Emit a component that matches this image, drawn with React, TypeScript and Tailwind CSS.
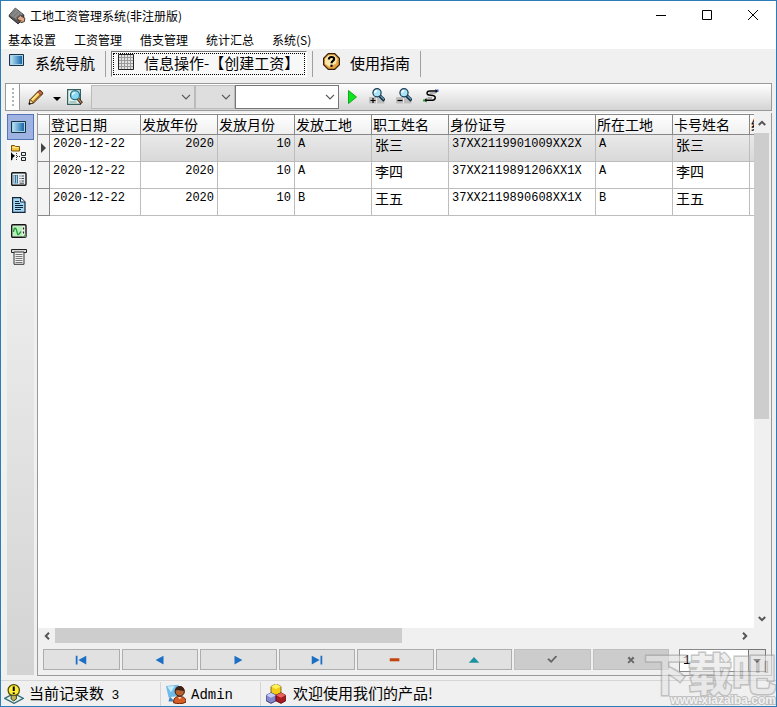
import type { ReactNode } from "react"

const menus = ["基本设置", "工资管理", "借支管理", "统计汇总", "系统(S)"]

const columns = [
  { title: "登记日期", width: "w-[91px]" },
  { title: "发放年份", width: "w-[77px]" },
  { title: "发放月份", width: "w-[77px]" },
  { title: "发放工地", width: "w-[77px]" },
  { title: "职工姓名", width: "w-[77px]" },
  { title: "身份证号", width: "w-[147px]" },
  { title: "所在工地", width: "w-[77px]" },
  { title: "卡号姓名", width: "w-[77px]" },
  { title: "结余", width: "w-[120px]" },
]

const records = [
  { date: "2020-12-22", year: 2020, month: 10, site: "A", name: "张三", idNo: "37XX2119901009XX2X" },
  { date: "2020-12-22", year: 2020, month: 10, site: "A", name: "李四", idNo: "37XX2119891206XX1X" },
  { date: "2020-12-22", year: 2020, month: 10, site: "B", name: "王五", idNo: "37XX2119890608XX1X" },
]

function Icon({ size = 16, className, children }: { size?: number; className?: string; children: ReactNode }) {
  return (
    <svg width={size} height={size} viewBox="0 0 16 16" className={className} aria-hidden="true">
      {children}
    </svg>
  )
}

function AppIcon() {
  return (
    <Icon size={18}>
      <path d="M6.5 1 14 7v3l-5 5L1 8.500 1.200 7z" fill="#555" stroke="#222" strokeWidth=".8" />
      <path d="M6.500 1 13 6.500 7.500 11 1.300 7z" fill="#8a8a8a" />
      <path d="M3 7.200 6.700 3M5 8.500 9 4.500M7 10l4-4" stroke="#666" strokeWidth=".7" />
      <path d="m8 10 3-2.500 4 2.500-.5 3-3 1z" fill="#d9a98a" stroke="#3b2a22" strokeWidth=".8" />
      <path d="m9 11.500 3 1" stroke="#6b4433" />
    </Icon>
  )
}

function ScreenIcon() {
  return (
    <Icon>
      <defs>
        <linearGradient id="screen" x1="0" x2="1" y1="0" y2="0">
          <stop offset="0" stopColor="#b4e0f5" />
          <stop offset="1" stopColor="#1667a8" />
        </linearGradient>
      </defs>
      <path d="M.5 2.500h14v11H.5z" fill="#a9cfe3" stroke="#16324a" />
      <path d="M2 4h11v8H2z" fill="url(#screen)" />
    </Icon>
  )
}

function GridIcon() {
  return (
    <Icon>
      <path d="M.5.500h15v15H.5z" fill="#e4e4e4" stroke="#222" />
      <path d="M3.500 1v14M6.500 1v14M9.500 1v14M12.500 1v14M1 3.500h14M1 6.500h14M1 9.500h14M1 12.500h14" stroke="#9a9a9a" />
    </Icon>
  )
}

function HelpIcon() {
  return (
    <Icon size={17}>
      <path d="M5 .6h6l4.400 4.400v6L11 15.400H5L.6 11V5z" fill="#e9a544" stroke="#3a2105" strokeWidth="1.200" />
      <path d="M5.500 2h5L13.500 5.500 12 10 6 13 2 10V5.500z" fill="#fce7ab" />
      <path d="M5.500 6c0-3 5-3 5-.3C10.500 7.500 8 7.500 8 9.600" fill="none" stroke="#000" strokeWidth="2" />
      <path d="M7 11h2v2H7z" />
    </Icon>
  )
}

function PencilIcon() {
  return (
    <Icon>
      <path d="M1 15.200 2.200 10.500 11 1.500c1-1 4.500 2 3.500 3.500L5.500 14z" fill="#efb43e" stroke="#3b2508" />
      <path d="m4 11 8-8" stroke="#fff0a8" strokeWidth="1.300" />
      <path d="m5.500 12.500 8-8" stroke="#a35f12" />
      <path d="M11 2c1-1 4 1.500 3.300 3L12.800 6.200 9.800 3.200z" fill="#c96a4a" stroke="#5c2512" strokeWidth=".7" />
      <path d="M1 15.200 2.200 10.500 5.500 14z" fill="#f6dfb0" stroke="#3b2508" strokeWidth=".8" />
      <path d="m.8 15.400.6-2.200 1.500 1.500z" />
    </Icon>
  )
}

function PreviewIcon() {
  return (
    <Icon>
      <path d="M.6.600h12.800v14.800H.6z" fill="#e3f1ec" stroke="#37615e" strokeWidth="1.200" />
      <path d="M2.500 13h7" stroke="#6aa39c" />
      <circle cx="8" cy="6.200" r="4.500" fill="#8bd8f2" stroke="#27708a" strokeWidth="1.300" />
      <path d="M5.500 6.200a2.500 2.500 0 0 1 2.500-2.500" fill="none" stroke="#fff" strokeWidth="1.200" />
      <path d="m11 9.800 3.800 4.400" stroke="#2c2115" strokeWidth="3" />
      <path d="m11 9.800 3.300 3.800" stroke="#c98d58" strokeWidth="1.300" />
    </Icon>
  )
}

function ZoomIcon({ sign }: { sign: "+" | "-" }) {
  return (
    <Icon>
      <rect x="0" y="9" width="15.500" height="6.500" rx="1" fill="#bdbdbd" />
      <path d="M7.500 9v6.500" stroke="#e8e8e8" />
      <path d="m10.500 7.500 5 5" stroke="#12283a" strokeWidth="3.200" />
      <path d="m11.500 8 3.500 3.500" stroke="#5f9cc0" strokeWidth="1.200" />
      <circle cx="8" cy="4.800" r="4.100" fill="#a9e4f7" stroke="#1b3b55" strokeWidth="1.200" />
      <path d="M6 4.800a2 2 0 0 1 2-2" fill="none" stroke="#fff" strokeWidth="1.500" />
      <path d={sign === "+" ? "M1.500 12.500h5M4 10v5" : "M1.500 12.500h5"} stroke="#000" strokeWidth="1.200" />
    </Icon>
  )
}

function RefreshIcon() {
  return (
    <Icon>
      <path d="M14.500 3H7C3.500 3 3 6.500 6 7l4 .6c3.500.6 2.500 4.600-.5 4.600H2" fill="none" stroke="#000" strokeWidth="1.500" />
      <path d="M6.500 5H12M4.500 10H9" stroke="#555" strokeWidth=".8" />
      <path d="m12.500 1 2.500 2-2.500 2.500z" fill="#111" />
      <path d="M3.500 10 1 12.200l2.500 2.300z" fill="#111" />
      <path d="M14 1.500h1.500V4H14z" fill="#35c" />
      <path d="M0 11.500h2v2H0z" fill="#2a2" />
    </Icon>
  )
}

function TreeIcon() {
  return (
    <Icon>
      <path d="M.5.500h3l1 1h4v4.500h-8z" fill="#f5c542" stroke="#7a5208" />
      <path d="M1.500 2.500h6" stroke="#fff0a5" />
      <path d="M0 7v8.500l1.500-1V13L4 10.800 1.500 9z" fill="#000" />
      <path d="M5.500 8v7M6 11.500h4" stroke="#333" strokeDasharray="1 1" />
      <path d="M10.500 7.500h4v3h-4zM10.500 12.500h4v3h-4z" fill="#e8eef5" stroke="#222" />
    </Icon>
  )
}

function FormIcon() {
  return (
    <Icon>
      <rect x=".7" y="1.700" width="14.300" height="12.600" rx="1" fill="#e9eff2" stroke="#151515" strokeWidth="1.400" />
      <path d="M2.500 4h4.500v8.500H2.500z" fill="#3f7496" />
      <path d="M3.500 4.500v8M5.500 4.500v8" stroke="#a9d2e6" />
      <path d="M8.500 5h1M8.500 7.500h1M8.500 10h1M10.500 5H13M10.500 7.500H13M10.500 10H13M8.500 12.200h4.500" stroke="#444" />
    </Icon>
  )
}

function DocumentIcon() {
  return (
    <Icon>
      <path d="M1.600.7H9.500L14 5v10.300H1.600z" fill="#a5d6f3" stroke="#12273c" strokeWidth="1.200" />
      <path d="M9.500 1v4H14" fill="#e6f5fd" stroke="#12273c" />
      <path d="M4 4.500h4M4 6.500h5M4 8.500h8M4 10.500h8M4 12.500h6" stroke="#0c2238" />
    </Icon>
  )
}

function ChartIcon() {
  return (
    <Icon>
      <rect x=".7" y="1.700" width="14.300" height="12.600" rx="1" fill="#e6f1e6" stroke="#151515" strokeWidth="1.400" />
      <path d="M2 3.200h9v9.800H2z" fill="#b5f0b5" />
      <path d="M2.500 9c.5-5 2.500-5 3.500 0s2 2 4-.5" fill="none" stroke="#21963a" strokeWidth="1.300" />
      <path d="M12.500 4.500v2M12.500 8.500v2" stroke="#222" strokeWidth="1.200" />
      <path d="m15 10-3.500 4.300H15z" fill="#5a9a5a" />
    </Icon>
  )
}

function ReportIcon() {
  return (
    <Icon>
      <path d="M.5.500h15v3H.5z" fill="#dcdcdc" stroke="#222" />
      <path d="M3 3h10v12.300H3z" fill="#f1f1f1" stroke="#333" />
      <path d="M4.500 5.500h7M4.500 7.500h7M4.500 9.500h7M4.500 11.500h7M4.500 13.500h7" stroke="#777" />
    </Icon>
  )
}

function TipIcon() {
  return (
    <Icon size={20}>
      <path d="m.5 11.500 7.500-4 7.500 4L8 15.500z" fill="#e2f3f1" stroke="#326c77" />
      <circle cx="7.800" cy="5" r="4.500" fill="#ffed36" stroke="#4f4900" />
      <path d="M5.700 9h4.200v3L7.800 13.500 5.700 12z" fill="#bdb45b" stroke="#444018" strokeWidth=".8" />
      <path d="M7.800 2v3.600M7.800 6.700v1.300" stroke="#000" strokeWidth="1.600" />
    </Icon>
  )
}

function UserIcon() {
  return (
    <Icon size={20}>
      <path d="m0 1.500 10-1v9l-8 1z" fill="#6fbbe8" />
      <path d="m1 2 6-.5-3 5z" fill="#c9ebfb" />
      <path d="m3 10 4 4H2z" fill="#3c85c0" />
      <path d="M6 15c0-5 3-5 5-5s5 .5 5 4.500c-3 1.500-7 1.500-10 .5z" fill="#d85c24" stroke="#6b2608" strokeWidth=".8" />
      <path d="m9.500 10.500 1.500 1.500 1.500-1.500z" fill="#fff" />
      <circle cx="11" cy="6" r="3.700" fill="#b5622f" stroke="#351708" strokeWidth=".8" />
      <path d="M7.300 5.500c0-5.500 7.700-5 7.400.2-3 0-5-1.700-7.400-.2z" fill="#3e2114" />
    </Icon>
  )
}

function CubesIcon() {
  return (
    <Icon size={20}>
      <path d="m8 0 4 2v5L8 9 4 7V2z" fill="#f2cc18" stroke="#5f4c00" strokeWidth=".6" />
      <path d="m8 0 4 2-4 2-4-2z" fill="#fff25d" />
      <path d="m4 7 4 2v4.500l-4 2-3.800-2V9z" fill="#8587cc" stroke="#282a66" strokeWidth=".6" />
      <path d="m4 7 4 2-4 2-3.800-2z" fill="#c6c8f5" />
      <path d="m12 7 3.700 2v4.500l-3.700 2-4-2V9z" fill="#a91920" stroke="#4d0003" strokeWidth=".6" />
      <path d="m12 7 3.700 2L12 11 8 9z" fill="#e8635e" />
    </Icon>
  )
}

function Chevron({ className }: { className?: string }) {
  return (
    <svg width="10" height="6" viewBox="0 0 10 6" className={className} aria-hidden="true">
      <path d="m1 .8 4 4 4-4" fill="none" stroke="currentColor" strokeWidth="1.200" />
    </svg>
  )
}

function ScrollChevron({ className }: { className?: string }) {
  return (
    <svg width="8" height="6" viewBox="0 0 8 6" className={className} aria-hidden="true">
      <path d="m.8 1 3.200 3.200L7.200 1" fill="none" stroke="currentColor" strokeWidth="2" />
    </svg>
  )
}

function ToolSelect({ label, className }: { label: string; className: string }) {
  return (
    <div className="relative">
      <select aria-label={label} className={`block h-6 appearance-none border outline-none ${className}`}>
        <option></option>
      </select>
      <Chevron className="pointer-events-none absolute right-1 top-[9px] text-[#555]" />
    </div>
  )
}

function Separator() {
  return <div className="h-[26px] w-px bg-[#a0a0a0]" />
}

const sideTools = [
  { label: "表格", icon: <ScreenIcon /> },
  { label: "分组", icon: <TreeIcon /> },
  { label: "表单", icon: <FormIcon /> },
  { label: "文档", icon: <DocumentIcon /> },
  { label: "图表", icon: <ChartIcon /> },
  { label: "报表", icon: <ReportIcon /> },
]

const navButtons = [
  { label: "首条", fill: "#1b6fc4", d: "M2 3h2v10H2zM14 3v10L5 8z" },
  { label: "上一条", fill: "#1b6fc4", d: "M12 3v10L3 8z" },
  { label: "下一条", fill: "#1b6fc4", d: "M4 3v10l9-5z" },
  { label: "末条", fill: "#1b6fc4", d: "M2 3v10l9-5zM12 3h2v10h-2z" },
  { label: "删除", fill: "#c2450f", d: "M2 6h11v3.500H2z" },
  { label: "编辑", fill: "#1a93a0", d: "M2 11h12L8 4.500z" },
  { label: "保存", fill: "#666", d: "m2.500 7 2-1L7 8.500 12 3l2 1-7 7.500z", disabled: true },
  { label: "取消", fill: "#666", d: "M4 6l2-2 2 2.500L10 4l2 2-2.500 2L12 10.500 10.500 12 8 9.500 5.500 12 4 10.500 6.500 8z", disabled: true },
]

function TitleBar() {
  return (
    <header className="bg-white">
      <div className="flex h-[30px] items-center gap-1 pl-[7px]">
        <AppIcon />
        <h1 className="flex-1 text-xs">工地工资管理系统(非注册版)</h1>
        <div className="flex h-full pb-[2px]">
          <button aria-label="最小化" className="grid h-full w-[46px] place-items-center">
            <svg width="10" height="10"><path d="M0 5.500h10" stroke="#000" /></svg>
          </button>
          <button aria-label="最大化" className="grid h-full w-[46px] place-items-center">
            <svg width="10" height="10"><path d="M.5.500h9v9h-9z" fill="none" stroke="#000" /></svg>
          </button>
          <button aria-label="关闭" className="grid h-full w-[46px] place-items-center">
            <svg width="10" height="10"><path d="m0 0 10 10M10 0 0 10" stroke="#000" /></svg>
          </button>
        </div>
      </div>
      <nav className="flex h-[18px] items-center gap-[18px] pl-[7px] text-xs">
        {menus.map((m) => (
          <button key={m}>{m}</button>
        ))}
      </nav>
    </header>
  )
}

function MainTabs() {
  return (
    <div className="flex h-[34px] items-center pb-[5px] text-[15px]">
      <button className="flex w-[104px] items-center gap-[10px] pl-2">
        <span className="pb-2"><ScreenIcon /></span>
        系统导航
      </button>
      <Separator />
      <button className="mx-[5px] flex h-[26px] w-[196px] items-center whitespace-nowrap border border-r-white border-b-white border-l-[#777] border-t-[#777] bg-[#f8f8f8] p-px">
        <span className="flex h-full w-full items-center gap-[10px] border border-dotted border-black pl-1">
          <span className="pb-1"><GridIcon /></span>
          信息操作-【创建工资】
        </span>
      </button>
      <Separator />
      <button className="flex w-[107px] items-center gap-[10px] pl-[10px]">
        <span className="pb-1"><HelpIcon /></span>
        使用指南
      </button>
      <Separator />
    </div>
  )
}

function ToolBar() {
  return (
    <div className="mx-1 flex h-7 items-center border border-[#999] bg-linear-to-b from-white to-[#d4d4d4]">
      <div className="flex h-full w-[14px] justify-center border-r border-[#999] bg-white py-1">
        <div className="h-full border-l-2 border-dotted border-[#b5b5b5]" />
      </div>
      <button aria-label="编辑" className="ml-2"><PencilIcon /></button>
      <button aria-label="编辑选项" className="ml-[9px] mt-1">
        <svg width="8" height="4" className="block"><path d="M0 0h8L4 4z" /></svg>
      </button>
      <button aria-label="预览" className="ml-[6px] mr-2"><PreviewIcon /></button>
      <ToolSelect label="字段" className="w-[104px] border-[#bbb] bg-[#dedede]" />
      <ToolSelect label="条件" className="w-10 border-[#bbb] bg-[#dedede]" />
      <ToolSelect label="内容" className="w-[104px] border-[#777] bg-white" />
      <button aria-label="执行" className="ml-[9px] mr-3">
        <svg width="9" height="14" className="block"><path d="M.5.500v13l8-6.500z" fill="#0be51c" stroke="#14a81c" /></svg>
      </button>
      <div className="flex items-center gap-[11px] pb-[2px]">
        <button aria-label="放大"><ZoomIcon sign="+" /></button>
        <button aria-label="缩小"><ZoomIcon sign="-" /></button>
        <button aria-label="刷新"><RefreshIcon /></button>
      </div>
    </div>
  )
}

function SideBar() {
  return (
    <aside className="mb-px mt-px flex w-[27px] flex-col bg-linear-to-b from-[#f8f8f8] to-[#d3d3d3]">
      {sideTools.map((tool, i) => (
        <button
          key={tool.label}
          aria-label={tool.label}
          className={`grid h-[26px] place-items-center border pr-1 ${i === 0 ? "border-[#5674b9] bg-[#9fb3e2]" : "border-transparent"}`}
        >
          {tool.icon}
        </button>
      ))}
    </aside>
  )
}

function RecordTable() {
  const cell = "whitespace-nowrap border-b border-r border-[#bdbdbd] px-[3px] align-top"
  const mono = "font-[Liberation_Mono,monospace] text-xs leading-[18px]"
  const cjk = "text-sm leading-[18px]"

  return (
    <table className="mt-px w-[832px] table-fixed border-separate border-spacing-0">
      <thead>
        <tr className="h-[21px] bg-linear-to-b from-white to-[#efefef]">
          <th className="w-3 border-b border-r border-t border-[#888]" aria-label="当前行"></th>
          {columns.map((c) => (
            <th key={c.title} className={`${c.width} whitespace-nowrap border-b border-r border-t border-[#888] px-px text-left text-sm leading-[19px] font-normal`}>
              {c.title}
            </th>
          ))}
        </tr>
      </thead>
      <tbody>
        {records.map((r, i) => (
          <tr key={r.idNo} className={i === 0 ? "h-[27px] bg-linear-to-b from-[#e9e9e9] to-[#d8d8d8]" : "h-[27px] bg-white"}>
            <td className="border-b border-r border-[#888] bg-[#f3f3f3] pl-[3px]">
              {i === 0 && <svg width="5" height="10" className="block"><path d="M0 0v10l5-5z" fill="#444" /></svg>}
            </td>
            <td className={`${cell} ${mono} bg-white`}>{r.date}</td>
            <td className={`${cell} ${mono} text-right`}>{r.year}</td>
            <td className={`${cell} ${mono} text-right`}>{r.month}</td>
            <td className={`${cell} ${mono}`}>{r.site}</td>
            <td className={`${cell} ${cjk}`}>{r.name}</td>
            <td className={`${cell} ${mono}`}>{r.idNo}</td>
            <td className={`${cell} ${mono}`}>{r.site}</td>
            <td className={`${cell} ${cjk}`}>{r.name}</td>
            <td className={cell}></td>
          </tr>
        ))}
      </tbody>
    </table>
  )
}

function VerticalScroll() {
  return (
    <div className="flex w-[17px] shrink-0 flex-col bg-[#f0f0f0] pr-[2px] text-[#555]">
      <button aria-label="向上" className="grid h-5 shrink-0 place-items-center"><ScrollChevron className="rotate-180" /></button>
      <div className="flex-1">
        <div className="h-3/5 w-full bg-[#cdcdcd]" />
      </div>
      <button aria-label="向下" className="grid h-[18px] shrink-0 place-items-center"><ScrollChevron /></button>
    </div>
  )
}

function HorizontalScroll() {
  return (
    <div className="flex h-[15px] shrink-0 items-center pr-[18px] text-[#555]">
      <button aria-label="向左" className="grid w-[17px] place-items-center"><ScrollChevron className="rotate-90" /></button>
      <div className="h-full flex-1">
        <div className="h-full w-[51%] bg-[#cdcdcd]" />
      </div>
      <button aria-label="向右" className="grid w-[17px] place-items-center"><ScrollChevron className="-rotate-90" /></button>
    </div>
  )
}

function Navigator() {
  return (
    <div className="flex items-start gap-[10px] px-[5px] pb-[3px] pt-[6px]">
      <div className="grid flex-1 grid-cols-8 gap-[2px]">
        {navButtons.map((b) => (
          <button
            key={b.label}
            aria-label={b.label}
            disabled={b.disabled}
            className={`grid h-[21px] place-items-center border ${b.disabled ? "border-[#bfbfbf] bg-[#cccccc]" : "border-[#adadad] bg-[#e1e1e1]"}`}
          >
            <Icon size={14}><path d={b.d} fill={b.fill} /></Icon>
          </button>
        ))}
      </div>
      <div className="relative">
        <select aria-label="页码" className="block h-[23px] w-[87px] appearance-none border border-[#888] bg-white px-[3px] font-[Liberation_Mono,monospace] text-[13px]">
          <option>1</option>
        </select>
        <div className="pointer-events-none absolute right-0 top-0 grid h-[23px] w-[18px] place-items-center border border-[#777] bg-[#e6e6e6]">
          <svg width="8" height="4"><path d="M0 0h8L4 4z" /></svg>
        </div>
      </div>
    </div>
  )
}

function StatusBar() {
  return (
    <footer className="flex h-[26px] items-center border-t border-[#d5d5d5] text-[15px]">
      <div className="flex w-[159px] items-center gap-[5px] pl-[3px]">
        <TipIcon />
        <span>当前记录数 <span className="ml-1 font-[Liberation_Mono,monospace] text-[13px]">3</span></span>
      </div>
      <div className="flex h-6 w-[100px] items-center gap-[5px] border-l border-[#d5d5d5] pl-[5px]">
        <UserIcon />
        <span className="pt-1 font-[Liberation_Mono,monospace] text-[14px]">Admin</span>
      </div>
      <div className="flex h-6 items-center gap-[7px] border-l border-[#d5d5d5] pl-[5px]">
        <CubesIcon />
        欢迎使用我们的产品!
      </div>
    </footer>
  )
}

export default function App() {
  return (
    <div className="relative flex h-screen flex-col overflow-hidden border border-[#2b7cb8] bg-[#f0f0f0] font-[Noto_Sans_CJK_SC,sans-serif] text-black">
      <TitleBar />
      <MainTabs />
      <ToolBar />
      <main className="mb-1 mt-[2px] flex min-h-0 flex-1 gap-[3px] pl-[6px] pr-1">
        <SideBar />
        <section className="flex min-w-0 flex-1 flex-col border border-[#999] border-t-0">
          <div className="flex min-h-0 flex-1">
            <div className="min-w-0 flex-1 overflow-hidden bg-white">
              <RecordTable />
            </div>
            <VerticalScroll />
          </div>
          <HorizontalScroll />
          <Navigator />
        </section>
      </main>
      <StatusBar />

      {/* Site mark */}
      <div aria-hidden="true" className="pointer-events-none absolute bottom-0 right-0 flex flex-col items-end opacity-60">
        <span className="text-[44px] leading-[44px] font-bold text-[#e6e6e6] [-webkit-text-stroke:3px_#a0a0a0] [paint-order:stroke]">下载吧</span>
        <span className="font-[Liberation_Sans,sans-serif] text-xs leading-3 font-bold text-[#f4f4f4] [-webkit-text-stroke:2px_#a0a0a0] [paint-order:stroke]">www.xiazaiba.com</span>
      </div>
    </div>
  )
}
